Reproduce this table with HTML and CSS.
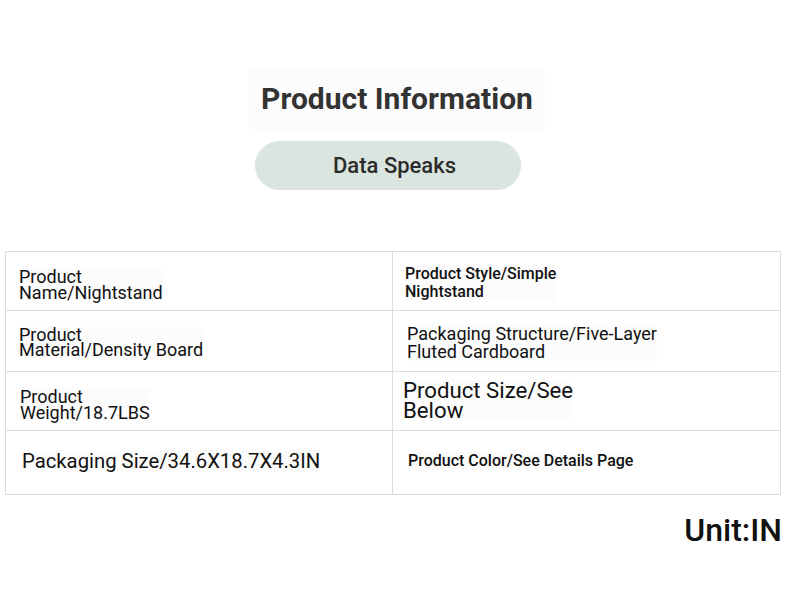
FILE: index.html
```html
<!DOCTYPE html>
<html lang="en">
<head>
<meta charset="utf-8">
<title>Product Information</title>
<link rel="stylesheet" href="styles.css">
</head>
<body>
<main class="page">
  <header class="head">
    <h1 class="title">Product Information</h1>
    <div class="pill">Data Speaks</div>
  </header>

  <section class="spec">
    <div class="cell c1"><span class="txt">Product<br>Name/Nightstand</span></div>
    <div class="cell c2"><span class="txt">Product Style/Simple<br>Nightstand</span></div>
    <div class="cell c3"><span class="txt">Product<br>Material/Density Board</span></div>
    <div class="cell c4"><span class="txt">Packaging Structure/Five-Layer<br>Fluted Cardboard</span></div>
    <div class="cell c5"><span class="txt">Product<br>Weight/18.7LBS</span></div>
    <div class="cell c6"><span class="txt">Product Size/See<br>Below</span></div>
    <div class="cell c7"><span class="txt">Packaging Size/34.6X18.7X4.3IN</span></div>
    <div class="cell c8"><span class="txt">Product Color/See Details Page</span></div>
  </section>

  <p class="unit">Unit:IN</p>
</main>
</body>
</html>
```

FILE: styles.css
```css
* { box-sizing: border-box; }

html, body {
  margin: 0;
  padding: 0;
  background: #ffffff;
}

body {
  width: 790px;
  height: 595px;
  overflow: hidden;
  font-family: Roboto, "Liberation Sans", Arial, sans-serif;
  color: #151515;
}

.page {
  display: flex;
  flex-direction: column;
  padding-top: 68px;
}

.head {
  display: flex;
  flex-direction: column;
  align-items: center;
}

.title {
  margin: 0 0 0 4px;
  padding: 13px 12px;
  font-size: 30px;
  line-height: 36px;
  font-weight: 700;
  color: #333333;
  background: #fcfcfc;
}

.pill {
  margin: 11px 0 0 -14px;
  width: 266px;
  height: 49px;
  padding-left: 13px;
  border-radius: 25px;
  background: #dae5df;
  text-align: center;
  font-size: 22px;
  line-height: 49px;
  font-weight: 500;
  color: #2b2b2b;
}

.spec {
  margin: 61px 0 0 5px;
  width: 776px;
  display: grid;
  grid-template-columns: 387px 388px;
  grid-template-rows: 59px 61px 59px 64px;
  border-top: 1px solid #dcdcdc;
  border-left: 1px solid #dcdcdc;
}

.cell {
  border-right: 1px solid #dcdcdc;
  border-bottom: 1px solid #dcdcdc;
  display: flex;
  align-items: flex-start;
}

.txt {
  display: inline-block;
  background: #fcfcfc;
  color: #111111;
}

.c1 { padding: 17px 0 0 13px; }
.c1 .txt { font-size: 18px; line-height: 15.5px; }

.c2 { padding: 12.5px 0 0 12px; }
.c2 .txt { font-size: 16px; line-height: 18px; font-weight: 500; }

.c3 { padding: 16px 0 0 13px; }
.c3 .txt { font-size: 18px; line-height: 15.3px; }

.c4 { padding: 13.7px 0 0 14px; }
.c4 .txt { font-size: 18px; line-height: 18.3px; }

.c5 { padding: 17px 0 0 14px; }
.c5 .txt { font-size: 18px; line-height: 16px; }

.c6 { padding: 8.4px 0 0 10px; }
.c6 .txt { font-size: 22.2px; line-height: 20px; }

.c7 { padding: 19.4px 0 0 16px; }
.c7 .txt { font-size: 20.3px; line-height: 22px; }

.c8 { padding: 21px 0 0 15px; }
.c8 .txt { font-size: 16px; line-height: 18px; font-weight: 500; }

.unit {
  margin: 15px 0 0 0;
  padding-right: 8px;
  text-align: right;
  font-size: 32px;
  line-height: 40px;
  font-weight: 500;
  color: #111111;
}
```
